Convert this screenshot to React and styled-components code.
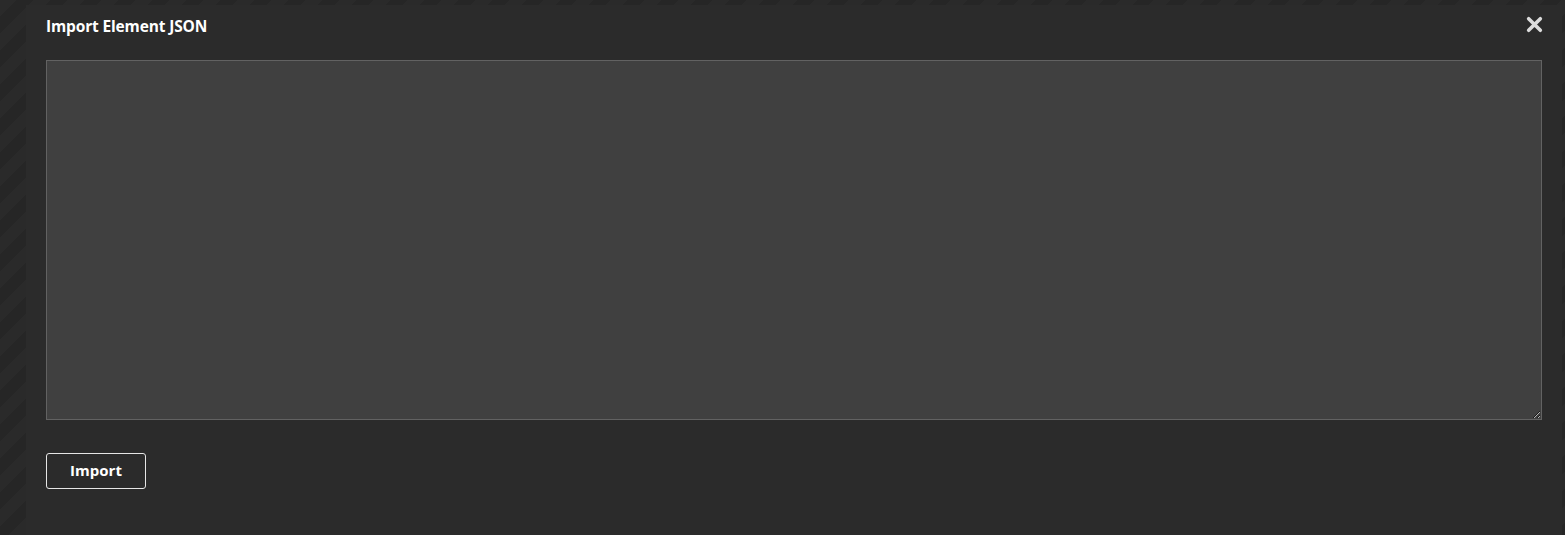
import React from 'react';
import styled, { createGlobalStyle } from 'styled-components';

const GlobalStyle = createGlobalStyle`
  html, body {
    margin: 0;
    height: 100%;
  }
  body {
    background: #262626;
    background-image: repeating-linear-gradient(
      135deg,
      #2a2a2a 0px,
      #2a2a2a 12px,
      #262626 12px,
      #262626 24px
    );
    font-family: "Segoe UI", "Open Sans", "Noto Sans", sans-serif;
    overflow: hidden;
  }
`;

const Overlay = styled.div`
  display: flex;
  height: 535px;
  padding: 5px 3px 0 26px;
  box-sizing: border-box;
`;

const Dialog = styled.section`
  flex: 1;
  display: flex;
  flex-direction: column;
  background: #2b2b2b;
  padding: 0 20px;
`;

const TitleBar = styled.header`
  display: flex;
  align-items: center;
  justify-content: space-between;
  height: 41px;
`;

const Title = styled.h2`
  margin: 0;
  color: #fff;
  font-size: 15.5px;
  font-weight: 700;
  letter-spacing: -0.15px;
`;

const CloseButton = styled.button`
  background: none;
  border: none;
  padding: 0;
  margin: -2px -2px 0 0;
  width: 20px;
  height: 20px;
  display: flex;
  align-items: center;
  justify-content: center;
  cursor: pointer;
`;

const JsonInput = styled.textarea`
  display: block;
  margin-top: 14px;
  height: 360px;
  width: 100%;
  box-sizing: border-box;
  background: #404040;
  border: 1px solid #626262;
  color: #eee;
  resize: both;
  outline: none;
`;

const ImportButton = styled.button`
  align-self: flex-start;
  margin-top: 33px;
  width: 100px;
  height: 36px;
  padding: 0 0 2px;
  background: transparent;
  border: 1px solid #e6e6e6;
  border-radius: 3px;
  color: #fff;
  font-family: inherit;
  font-size: 15px;
  font-weight: 700;
  cursor: pointer;
`;

const App = () => (
  <>
    <GlobalStyle />
    <Overlay>
      <Dialog>
        <TitleBar>
          <Title>Import Element JSON</Title>
          <CloseButton aria-label="Close">
            <svg width="17" height="17" viewBox="0 0 16 16">
              <path
                d="M2.5 2.5 L13.5 13.5 M13.5 2.5 L2.5 13.5"
                stroke="#dcdcdc"
                strokeWidth="3.4"
                strokeLinecap="round"
              />
            </svg>
          </CloseButton>
        </TitleBar>
        <JsonInput />
        <ImportButton>Import</ImportButton>
      </Dialog>
    </Overlay>
  </>
);

export default App;
